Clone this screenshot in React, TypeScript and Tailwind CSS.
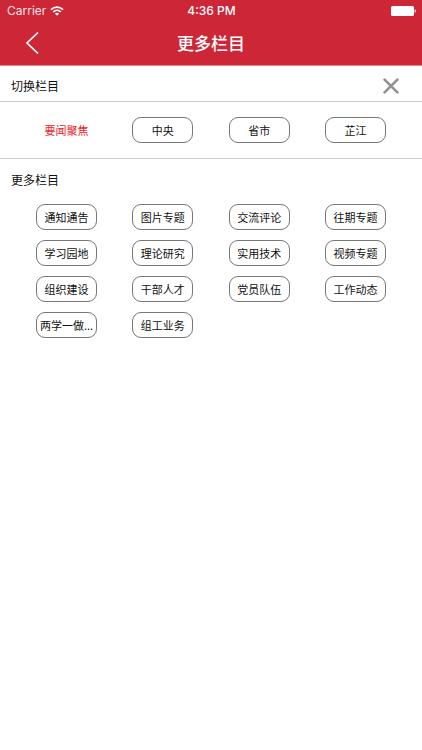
import React from "react";

const currentColumns = ["中央", "省市", "芷江"];

const moreColumns = [
  "通知通告", "图片专题", "交流评论", "往期专题",
  "学习园地", "理论研究", "实用技术", "视频专题",
  "组织建设", "干部人才", "党员队伍", "工作动态",
  "两学一做...", "组工业务",
];

function ColumnButton({ label }: { label: string }) {
  return (
    <button
      type="button"
      className="h-[26px] w-[61px] rounded-[9px] border border-[#777777] text-center text-[11px] leading-6 whitespace-nowrap text-[#111111]"
    >
      {label}
    </button>
  );
}

function StatusBar() {
  return (
    <div className="grid h-[22px] grid-cols-3 items-center pr-[6px] pl-[7px] font-['Inter','Liberation_Sans',sans-serif] text-[12px] leading-4">
      <div className="flex items-center gap-1">
        <span className="text-[#fbe3e6]">Carrier</span>
        <svg width="14" height="10" viewBox="0 0 14 10" fill="none" stroke="white" strokeWidth="1.7" aria-hidden="true">
          <path d="M1 3.6C4.4.3 9.6.3 13 3.6" />
          <path d="M3.2 6C5.4 3.9 8.6 3.9 10.8 6" />
          <path d="M4.9 7.5C6.1 6.4 7.9 6.4 9.1 7.5L7 9.7Z" fill="white" stroke="none" />
        </svg>
      </div>
      <span className="text-center font-medium">4:36 PM</span>
      <svg className="justify-self-end" width="25" height="10" viewBox="0 0 25 10" fill="white" aria-hidden="true">
        <rect width="23" height="10" rx="1.5" />
        <path d="M23.6 3.2C25.3 3.6 25.3 6.4 23.6 6.8Z" />
      </svg>
    </div>
  );
}

export default function App() {
  return (
    <div className="min-h-screen bg-white font-['Noto_Sans_CJK_SC',sans-serif] text-[#111111]">
      <header className="border-b border-[#e98591] bg-[#cc2637] text-white">
        <StatusBar />
        <div className="grid h-[43px] grid-cols-[48px_1fr_48px] items-center pb-[2px]">
          <button type="button" aria-label="返回" className="flex h-full items-center justify-end pr-[9px]">
            <svg width="14" height="24" viewBox="0 0 14 24" fill="none" stroke="white" strokeWidth="1.7" aria-hidden="true">
              <path d="M13 1.5L2 12L13 22.5" />
            </svg>
          </button>
          <h1 className="text-center text-[17px] leading-6 font-medium">更多栏目</h1>
        </div>
      </header>

      <main>
        <section>
          <div className="flex h-9 items-center justify-between border-b border-[#cfcfcf] pt-1 pr-[23px] pl-[11px]">
            <h2 className="text-[12px] leading-5">切换栏目</h2>
            <button type="button" aria-label="关闭">
              <svg width="16" height="16" viewBox="0 0 16 16" fill="none" stroke="#929292" strokeWidth="2.7" strokeLinecap="round" aria-hidden="true">
                <path d="M1.6 1.6L14.4 14.4M14.4 1.6L1.6 14.4" />
              </svg>
            </button>
          </div>
          <div className="grid grid-cols-[repeat(4,61px)] justify-between border-b border-[#cfcfcf] px-9 py-[15px]">
            <button type="button" aria-current="true" className="h-[26px] text-center text-[11px] leading-6 text-[#ef2027]">
              要闻聚焦
            </button>
            {currentColumns.map((label) => (
              <ColumnButton key={label} label={label} />
            ))}
          </div>
        </section>

        <section>
          <div className="flex h-[42px] items-center pl-[11px]">
            <h2 className="text-[12px] leading-5">更多栏目</h2>
          </div>
          <div className="grid grid-cols-[repeat(4,61px)] justify-between gap-y-[10px] px-9 pt-[3px]">
            {moreColumns.map((label) => (
              <ColumnButton key={label} label={label} />
            ))}
          </div>
        </section>
      </main>
    </div>
  );
}
